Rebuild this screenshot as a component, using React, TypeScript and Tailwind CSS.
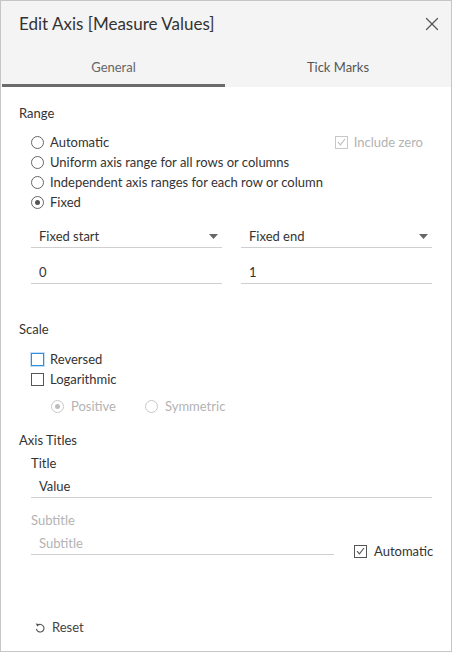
import { X } from 'lucide-react';

function Radio({ checked = false, disabled = false }: { checked?: boolean; disabled?: boolean }) {
  return (
    <span
      className={`flex h-[13px] w-[13px] shrink-0 items-center justify-center rounded-full border bg-white ${
        disabled ? 'border-[#c8c8c8]' : 'border-[#666]'
      }`}
    >
      {checked && <span className={`h-[5px] w-[5px] rounded-full ${disabled ? 'bg-[#bdbdbd]' : 'bg-[#555]'}`} />}
    </span>
  );
}

function Check({ checked = false, disabled = false, focus = false }: { checked?: boolean; disabled?: boolean; focus?: boolean }) {
  const border = focus ? 'border-[#2f8ee0] shadow-[0_0_0_1px_#c7e0f7]' : disabled ? 'border-[#c8c8c8]' : 'border-[#555]';
  return (
    <span className={`flex h-[13px] w-[13px] shrink-0 items-center justify-center border bg-white ${border}`}>
      {checked && (
        <svg width="9" height="8" viewBox="0 0 9 8" fill="none">
          <path d="M1 4.2 L3.4 6.8 L8 1" stroke={disabled ? '#bdbdbd' : '#555'} strokeWidth="1.1" />
        </svg>
      )}
    </span>
  );
}

function RadioRow({ label, checked }: { label: string; checked?: boolean }) {
  return (
    <div className="flex h-[20px] items-center gap-[6px] pl-[12px]">
      <Radio checked={checked} />
      <span>{label}</span>
    </div>
  );
}

function Field({ text, dropdown, muted }: { text: string; dropdown?: boolean; muted?: boolean }) {
  return (
    <div className="flex items-center justify-between border-b border-[#cfcfcf] pb-[1px] pl-[8px] pr-[4px] pt-[14px]">
      <span className={`leading-[20px] ${muted ? 'text-[#b3b3b3]' : ''}`}>{text}</span>
      {dropdown && (
        <svg width="9" height="5" viewBox="0 0 9 5">
          <path d="M0 0 H9 L4.5 5 Z" fill="#666" />
        </svg>
      )}
    </div>
  );
}

export default function App() {
  return (
    <div
      className="flex h-[652px] w-[452px] flex-col border border-[#c6c6c6] bg-white text-[13px] leading-[20px] text-[#333]"
      style={{ fontFamily: 'Lato, "Noto Sans", sans-serif' }}
    >
      <div className="bg-[#f4f4f4]">
        <div className="flex h-[45px] items-center justify-between pl-[18px] pr-[8px]">
          <span className="text-[17px] text-[#333]">Edit Axis [Measure Values]</span>
          <X className="h-[22px] w-[22px] text-[#555]" strokeWidth={1.3} />
        </div>
        <div className="flex h-[41px] pl-[1px]">
          <div className="flex w-[223px] items-center justify-center border-b-[3px] border-[#6b6b6b] pt-[3px] text-[#666]">
            General
          </div>
          <div className="flex flex-1 items-center justify-center text-[#555]">Tick Marks</div>
        </div>
      </div>

      <div className="flex flex-1 flex-col pl-[18px] pr-[19px]">
        <div className="mt-[16px]">Range</div>
        <div className="mt-[9px] flex items-start justify-between">
          <div>
            <RadioRow label="Automatic" />
            <RadioRow label="Uniform axis range for all rows or columns" />
            <RadioRow label="Independent axis ranges for each row or column" />
            <RadioRow label="Fixed" checked />
          </div>
          <div className="mr-[9px] flex h-[20px] items-center gap-[6px] text-[#b3b3b3]">
            <Check checked disabled />
            <span>Include zero</span>
          </div>
        </div>

        <div className="ml-[12px] grid grid-cols-2 gap-x-[19px]">
          <Field text="Fixed start" dropdown />
          <Field text="Fixed end" dropdown />
          <Field text="0" />
          <Field text="1" />
        </div>

        <div className="mt-[35px]">Scale</div>
        <div className="mt-[10px] pl-[12px]">
          <div className="flex h-[20px] items-center gap-[6px]">
            <Check focus />
            <span>Reversed</span>
          </div>
          <div className="flex h-[20px] items-center gap-[6px]">
            <Check />
            <span>Logarithmic</span>
          </div>
          <div className="mt-[7px] flex h-[20px] items-center pl-[20px] text-[#b3b3b3]">
            <div className="flex w-[94px] items-center gap-[7px]">
              <Radio checked disabled />
              <span>Positive</span>
            </div>
            <div className="flex items-center gap-[7px]">
              <Radio disabled />
              <span>Symmetric</span>
            </div>
          </div>
        </div>

        <div className="mt-[14px]">Axis Titles</div>
        <div className="ml-[12px]">
          <div className="mt-[3px]">Title</div>
          <div className="border-b border-[#cfcfcf] pb-[1px] pl-[8px] pt-[3px]">Value</div>
          <div className="mt-[12px] text-[#b3b3b3]">Subtitle</div>
          <div className="flex items-end gap-[20px]">
            <div className="flex-1 border-b border-[#cfcfcf] pb-[1px] pl-[8px] pt-[3px] text-[#b3b3b3]">Subtitle</div>
            <div className="mb-[-6px] flex h-[20px] w-[78px] items-center gap-[7px]">
              <Check checked />
              <span>Automatic</span>
            </div>
          </div>
        </div>

        <div className="mt-auto flex items-center gap-[7px] pb-[14px] pl-[16px] text-[#444]">
          <svg width="10" height="11" viewBox="0 0 10 11" fill="none">
            <path d="M2.6 3.4 A3.8 3.8 0 1 1 1.4 6.8" stroke="#555" strokeWidth="1.1" />
            <path d="M0.6 1.6 L3.8 1.9 L2.6 4.8 Z" fill="#555" />
          </svg>
          <span>Reset</span>
        </div>
      </div>
    </div>
  );
}
